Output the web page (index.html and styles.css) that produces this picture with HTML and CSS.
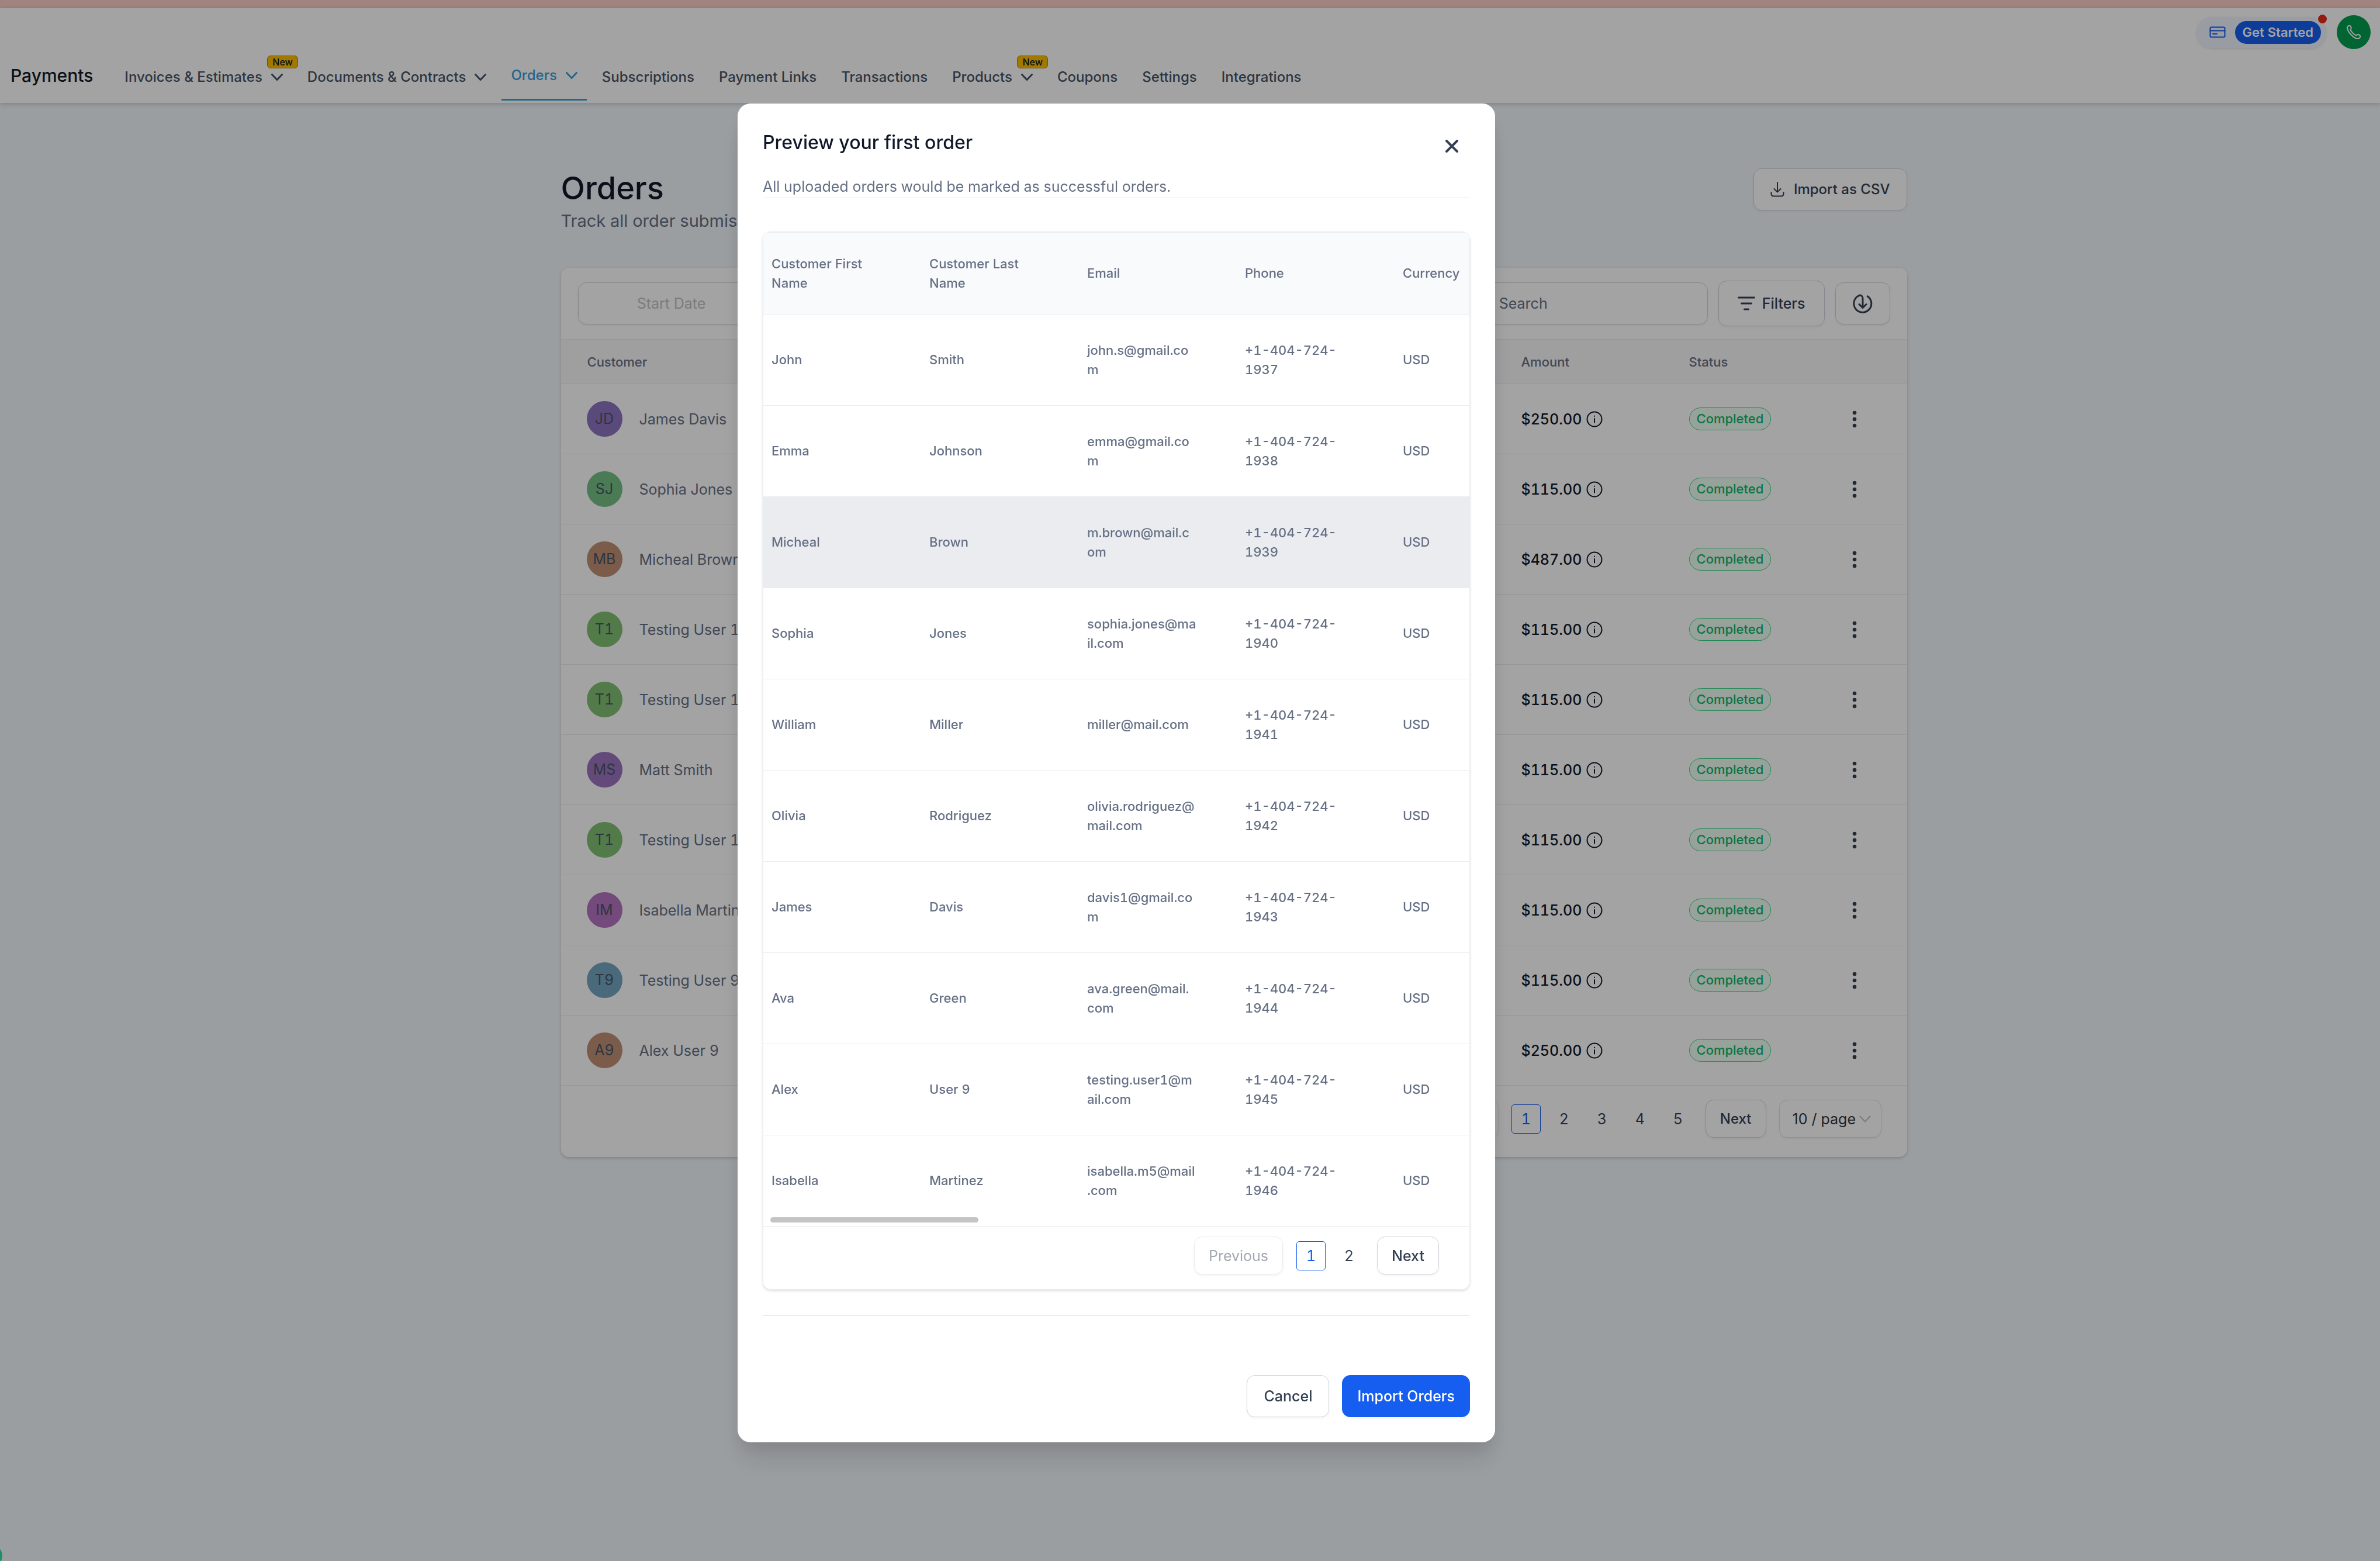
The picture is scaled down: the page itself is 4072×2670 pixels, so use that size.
FILE: index.html
```html
<!DOCTYPE html>
<html lang="en">

<head>
  <meta charset="UTF-8" />
  <meta name="viewport" content="width=device-width, initial-scale=1.0" />
  <title>Payments - Orders</title>
  <link rel="stylesheet" href="styles.css">
</head>

<body>
  <!-- Shared icons -->
  <svg class="sprite" aria-hidden="true">
    <symbol id="chevron" viewBox="0 0 20 12"><path d="M1.5 1.5 10 10.5l8.500-9" /></symbol>
    <symbol id="info" viewBox="0 0 28 28"><circle cx="14" cy="14" r="12.500" /><path d="M14 13v6.500M14 8.500v.5" /></symbol>
    <symbol id="dots" viewBox="0 0 8 30"><circle cx="4" cy="4" r="3.300" /><circle cx="4" cy="15" r="3.300" /><circle cx="4" cy="26" r="3.300" /></symbol>
  </svg>

  <div class="alert-strip"></div>

  <header class="header">
    <div class="header-top">
      <div class="start-pill">
        <svg class="icon card-icon" viewBox="0 0 28 20"><rect x="1.5" y="1.500" width="25" height="17" rx="2" /><path d="M1.500 7.500h25M6 13h7" /></svg>
        <button class="start-button">Get Started</button>
        <span class="red-dot"></span>
      </div>
      <button class="phone-button" aria-label="Call">
        <svg class="icon" viewBox="0 0 24 24"><path d="M1 4.500C1 2.500 3 .8 4.800.8c1.500 0 3 2.600 3 4.200 0 1.300-1.500 1.800-1.300 3 .6 2.400 6.600 8.800 9.500 9.400 1.300.2 1.800-1.400 3.200-1.400 1.600 0 4 1.600 4 3.100 0 2-1.800 4-4 4C12.500 23.100 1 11.500 1 4.500z" /></svg>
      </button>
    </div>
    <nav class="nav">
      <span class="nav-title">Payments</span>
      <a href="#">Invoices &amp; Estimates <svg class="icon chevron"><use href="#chevron" /></svg><span class="new-badge">New</span></a>
      <a href="#">Documents &amp; Contracts <svg class="icon chevron"><use href="#chevron" /></svg></a>
      <a href="#" class="active">Orders <svg class="icon chevron"><use href="#chevron" /></svg></a>
      <a href="#">Subscriptions</a>
      <a href="#">Payment Links</a>
      <a href="#">Transactions</a>
      <a href="#">Products <svg class="icon chevron"><use href="#chevron" /></svg><span class="new-badge">New</span></a>
      <a href="#">Coupons</a>
      <a href="#">Settings</a>
      <a href="#">Integrations</a>
    </nav>
  </header>

  <div class="page">
    <main class="content">
      <div class="page-heading">
        <div>
          <h1>Orders</h1>
          <p>Track all order submissions</p>
        </div>
        <button class="button import-button">
          <svg class="icon import-icon" viewBox="0 0 24 26"><path d="M12 1v16M6.500 12l5.500 5.500 5.500-5.500M1.500 18v3a3.500 3.500 0 0 0 3.500 3.500h14a3.500 3.500 0 0 0 3.500-3.500v-3" /></svg>
          Import as CSV
        </button>
      </div>

      <section class="card">
        <div class="toolbar">
          <input class="field date-field" type="text" placeholder="Start Date" aria-label="Start date" />
          <input class="field search-field" type="text" placeholder="Search" aria-label="Search" />
          <button class="button filter-button">
            <svg class="icon filter-icon" viewBox="0 0 30 24"><path d="M1.500 2h27M6.500 12h17M11.500 22h7" /></svg>
            Filters
          </button>
          <button class="button download-button" aria-label="Download">
            <svg class="icon" viewBox="0 0 34 34"><path d="M25.200 4.800A15 15 0 1 1 10 3.800c4-1.900 7 .4 7 5.200v15M11 18.500l6 6 6-6" /></svg>
          </button>
        </div>

        <table class="orders-table">
          <thead>
            <tr><th class="col-customer">Customer</th><th class="col-amount">Amount</th><th class="col-status">Status</th><th></th></tr>
          </thead>
          <tbody>
            <tr>
              <td><div class="customer"><span class="avatar indigo">JD</span>James Davis</div></td>
              <td><div class="amount">$250.00 <svg class="icon"><use href="#info" /></svg></div></td>
              <td><span class="status">Completed</span></td>
              <td><button class="row-menu" aria-label="More"><svg><use href="#dots" /></svg></button></td>
            </tr>
            <tr>
              <td><div class="customer"><span class="avatar green">SJ</span>Sophia Jones</div></td>
              <td><div class="amount">$115.00 <svg class="icon"><use href="#info" /></svg></div></td>
              <td><span class="status">Completed</span></td>
              <td><button class="row-menu" aria-label="More"><svg><use href="#dots" /></svg></button></td>
            </tr>
            <tr>
              <td><div class="customer"><span class="avatar brown">MB</span>Micheal Brown</div></td>
              <td><div class="amount">$487.00 <svg class="icon"><use href="#info" /></svg></div></td>
              <td><span class="status">Completed</span></td>
              <td><button class="row-menu" aria-label="More"><svg><use href="#dots" /></svg></button></td>
            </tr>
            <tr>
              <td><div class="customer"><span class="avatar lime">T1</span>Testing User 1</div></td>
              <td><div class="amount">$115.00 <svg class="icon"><use href="#info" /></svg></div></td>
              <td><span class="status">Completed</span></td>
              <td><button class="row-menu" aria-label="More"><svg><use href="#dots" /></svg></button></td>
            </tr>
            <tr>
              <td><div class="customer"><span class="avatar lime">T1</span>Testing User 1</div></td>
              <td><div class="amount">$115.00 <svg class="icon"><use href="#info" /></svg></div></td>
              <td><span class="status">Completed</span></td>
              <td><button class="row-menu" aria-label="More"><svg><use href="#dots" /></svg></button></td>
            </tr>
            <tr>
              <td><div class="customer"><span class="avatar purple">MS</span>Matt Smith</div></td>
              <td><div class="amount">$115.00 <svg class="icon"><use href="#info" /></svg></div></td>
              <td><span class="status">Completed</span></td>
              <td><button class="row-menu" aria-label="More"><svg><use href="#dots" /></svg></button></td>
            </tr>
            <tr>
              <td><div class="customer"><span class="avatar lime">T1</span>Testing User 1</div></td>
              <td><div class="amount">$115.00 <svg class="icon"><use href="#info" /></svg></div></td>
              <td><span class="status">Completed</span></td>
              <td><button class="row-menu" aria-label="More"><svg><use href="#dots" /></svg></button></td>
            </tr>
            <tr>
              <td><div class="customer"><span class="avatar magenta">IM</span>Isabella Martinez</div></td>
              <td><div class="amount">$115.00 <svg class="icon"><use href="#info" /></svg></div></td>
              <td><span class="status">Completed</span></td>
              <td><button class="row-menu" aria-label="More"><svg><use href="#dots" /></svg></button></td>
            </tr>
            <tr>
              <td><div class="customer"><span class="avatar blue">T9</span>Testing User 9</div></td>
              <td><div class="amount">$115.00 <svg class="icon"><use href="#info" /></svg></div></td>
              <td><span class="status">Completed</span></td>
              <td><button class="row-menu" aria-label="More"><svg><use href="#dots" /></svg></button></td>
            </tr>
            <tr>
              <td><div class="customer"><span class="avatar brown">A9</span>Alex User 9</div></td>
              <td><div class="amount">$250.00 <svg class="icon"><use href="#info" /></svg></div></td>
              <td><span class="status">Completed</span></td>
              <td><button class="row-menu" aria-label="More"><svg><use href="#dots" /></svg></button></td>
            </tr>
          </tbody>
        </table>

        <div class="pagination card-pagination">
          <button class="page-button" disabled>Previous</button>
          <div class="pages">
            <button class="page-number current">1</button>
            <button class="page-number">2</button>
            <button class="page-number">3</button>
            <button class="page-number">4</button>
            <button class="page-number">5</button>
          </div>
          <button class="page-button">Next</button>
          <div class="page-size">
            <select aria-label="Rows per page">
              <option>10 / page</option>
            </select>
            <svg class="icon chevron"><use href="#chevron" /></svg>
          </div>
        </div>
      </section>
    </main>
  </div>

  <div class="overlay">
    <div class="modal" role="dialog" aria-labelledby="modalTitle">
      <div class="modal-header">
        <h2 id="modalTitle">Preview your first order</h2>
        <button class="close-button" aria-label="Close">
          <svg class="icon" viewBox="0 0 22 22"><path d="M2 2l18 18M20 2 2 20" /></svg>
        </button>
      </div>
      <p class="modal-text">All uploaded orders would be marked as successful orders.</p>

      <div class="preview">
        <div class="preview-scroll">
          <table class="preview-table">
            <thead>
              <tr><th>Customer First Name</th><th>Customer Last Name</th><th>Email</th><th>Phone</th><th>Currency</th></tr>
            </thead>
            <tbody>
              <tr><td>John</td><td>Smith</td><td>john.s@gmail.com</td><td>+1-404-724-1937</td><td>USD</td></tr>
              <tr><td>Emma</td><td>Johnson</td><td>emma@gmail.com</td><td>+1-404-724-1938</td><td>USD</td></tr>
              <tr class="selected"><td>Micheal</td><td>Brown</td><td>m.brown@mail.com</td><td>+1-404-724-1939</td><td>USD</td></tr>
              <tr><td>Sophia</td><td>Jones</td><td>sophia.jones@mail.com</td><td>+1-404-724-1940</td><td>USD</td></tr>
              <tr><td>William</td><td>Miller</td><td>miller@mail.com</td><td>+1-404-724-1941</td><td>USD</td></tr>
              <tr><td>Olivia</td><td>Rodriguez</td><td>olivia.rodriguez@mail.com</td><td>+1-404-724-1942</td><td>USD</td></tr>
              <tr><td>James</td><td>Davis</td><td>davis1@gmail.com</td><td>+1-404-724-1943</td><td>USD</td></tr>
              <tr><td>Ava</td><td>Green</td><td>ava.green@mail.com</td><td>+1-404-724-1944</td><td>USD</td></tr>
              <tr><td>Alex</td><td>User 9</td><td>testing.user1@mail.com</td><td>+1-404-724-1945</td><td>USD</td></tr>
              <tr><td>Isabella</td><td>Martinez</td><td>isabella.m5@mail.com</td><td>+1-404-724-1946</td><td>USD</td></tr>
            </tbody>
          </table>
          <div class="scroll-thumb"></div>
        </div>
        <div class="pagination preview-pagination">
          <button class="page-button" disabled>Previous</button>
          <div class="pages">
            <button class="page-number current">1</button>
            <button class="page-number">2</button>
          </div>
          <button class="page-button">Next</button>
        </div>
      </div>

      <div class="modal-footer">
        <button class="button cancel-button">Cancel</button>
        <button class="button primary">Import Orders</button>
      </div>
    </div>
  </div>

  <div class="help-bubble"></div>
</body>

</html>
```

FILE: styles.css
```css
* {
  box-sizing: border-box;
}

body {
  margin: 0;
  min-height: 100vh;
  overflow: hidden;
  background-color: #f2f7fa;
  color: #344054;
  font-family: Inter, sans-serif;
  font-size: 25px;
  font-variant-numeric: tabular-nums;
  line-height: 36px;
}

h1,
h2,
p {
  margin: 0;
}

button,
input,
select {
  margin: 0;
  font: inherit;
  color: inherit;
}

button {
  cursor: pointer;
}

.sprite {
  position: absolute;
  width: 0;
  height: 0;
}

.icon {
  flex: none;
  fill: none;
  stroke: currentColor;
  stroke-width: 3px;
  stroke-linecap: round;
  stroke-linejoin: round;
}

.chevron {
  width: 20px;
  height: 12px;
}

/* Header */
.alert-strip {
  height: 14px;
  background-color: #fccec8;
}

.header {
  position: relative;
  height: 162px;
  padding: 12px 16px 4px 18px;
  display: flex;
  flex-direction: column;
  justify-content: space-between;
  background-color: #fff;
  box-shadow: 0 2px 8px rgba(16, 24, 40, 0.2);
}

.header-top {
  display: flex;
  justify-content: flex-end;
  align-items: center;
  gap: 18px;
}

.start-pill {
  position: relative;
  display: flex;
  align-items: center;
  gap: 16px;
  padding: 7px 9px 7px 22px;
  border-radius: 27px;
  background-color: #eff4ff;
  box-shadow: 0 2px 4px rgba(16, 24, 40, 0.1);
}

.card-icon {
  width: 28px;
  height: 20px;
  color: #155eef;
  stroke-width: 2px;
}

.start-button {
  height: 39px;
  padding: 0 13px;
  border: 0;
  border-radius: 20px;
  background-color: #155eef;
  color: #fff;
  font-size: 22px;
  font-weight: 600;
  line-height: 39px;
}

.red-dot {
  position: absolute;
  top: -4px;
  right: -1px;
  width: 15px;
  height: 15px;
  border-radius: 50%;
  background-color: #e92a19;
}

.phone-button {
  display: flex;
  align-items: center;
  justify-content: center;
  width: 58px;
  height: 58px;
  padding: 0;
  border: 0;
  border-radius: 50%;
  background-color: #009f51;
  color: #fff;
}

.phone-button .icon {
  width: 24px;
  height: 24px;
  stroke-width: 2px;
}

.nav {
  display: flex;
  align-items: flex-end;
  gap: 10px;
}

.nav-title {
  margin-right: 28px;
  padding-bottom: 25px;
  color: #101828;
  font-size: 30px;
  font-weight: 500;
}

.nav a {
  position: relative;
  display: flex;
  align-items: center;
  gap: 15px;
  padding: 0 16px 22px;
  color: #475467;
  font-size: 24px;
  font-weight: 500;
  text-decoration: none;
}

.nav a.active {
  border-bottom: 3px solid #38a0db;
  color: #38a0db;
}

.new-badge {
  position: absolute;
  top: -19px;
  right: -10px;
  padding: 0 8px;
  border: 1px solid #b58600;
  border-radius: 6px;
  background-color: #ffbc00;
  color: #101828;
  font-size: 16px;
  line-height: 20px;
}

/* Page */
.page {
  padding-left: 150px;
}

.content {
  max-width: 2303px;
  margin: 0 auto;
  padding-top: 112px;
}

.page-heading {
  display: flex;
  justify-content: space-between;
  align-items: flex-start;
  margin-bottom: 60px;
}

.page-heading h1 {
  margin-bottom: 2px;
  color: #101828;
  font-size: 54px;
  font-weight: 500;
  line-height: 68px;
}

.page-heading p {
  color: #667085;
  font-size: 29px;
  line-height: 40px;
}

.button {
  display: flex;
  align-items: center;
  justify-content: center;
  height: 72px;
  padding: 0 28px;
  border: 1px solid #d0d5dd;
  border-radius: 14px;
  background-color: #fff;
  box-shadow: 0 2px 4px rgba(16, 24, 40, 0.05);
  font-weight: 500;
}

.import-button {
  gap: 16px;
  font-size: 24px;
}

.import-icon {
  width: 24px;
  height: 26px;
  stroke-width: 2px;
}

.card {
  border-radius: 14px;
  background-color: #fff;
  box-shadow: 0 2px 5px rgba(16, 24, 40, 0.2);
}

.toolbar {
  display: flex;
  align-items: center;
  gap: 18px;
  padding: 22px 29px;
}

.field {
  height: 72px;
  padding: 0 42px;
  border: 1px solid #d0d5dd;
  border-radius: 14px;
  background-color: #fff;
  box-shadow: 0 2px 4px rgba(16, 24, 40, 0.05);
}

.field::placeholder {
  color: #667085;
  opacity: 1;
}

.date-field {
  width: 320px;
  text-align: center;
}

.date-field::placeholder {
  color: #c2c2c2;
}

.search-field {
  width: 400px;
  margin-left: auto;
}

.filter-button {
  gap: 12px;
  height: 78px;
  padding: 0 32px;
}

.filter-icon {
  width: 30px;
  height: 24px;
}

.download-button {
  width: 94px;
  padding: 0;
}

.download-button .icon {
  width: 34px;
  height: 34px;
}

table {
  border-spacing: 0;
  table-layout: fixed;
}

th {
  text-align: left;
  font-weight: 500;
}

.orders-table {
  width: 100%;
}

.orders-table th {
  height: 77px;
  padding: 0;
  border-top: 1px solid #eaecf0;
  border-bottom: 1px solid #eaecf0;
  background-color: #f9f9fa;
  color: #667085;
  font-size: 22px;
}

.orders-table td {
  height: 120px;
  padding: 0;
  border-bottom: 1px solid #eaecf0;
}

.orders-table .col-customer {
  padding-left: 45px;
}

.orders-table td:first-child {
  padding-left: 44px;
}

.col-amount {
  width: 287px;
}

.col-status {
  width: 273px;
}

.orders-table th:last-child {
  width: 100px;
}

.customer {
  display: flex;
  align-items: center;
  gap: 29px;
  color: #667085;
}

.avatar {
  width: 61px;
  height: 61px;
  border-radius: 50%;
  color: #475467;
  line-height: 61px;
  text-align: center;
}

.avatar.indigo { background-color: #8b75c0; }
.avatar.green { background-color: #75c086; }
.avatar.brown { background-color: #c09075; }
.avatar.lime { background-color: #82c075; }
.avatar.purple { background-color: #9d75c0; }
.avatar.magenta { background-color: #b575c0; }
.avatar.blue { background-color: #75a5c0; }

.amount {
  display: flex;
  align-items: center;
  gap: 8px;
  color: #101828;
  font-weight: 500;
}

.amount .icon {
  width: 28px;
  height: 28px;
  stroke-width: 2px;
}

.status {
  display: inline-block;
  padding: 0 12px;
  border: 1px solid #32d583;
  border-radius: 20px;
  background-color: #ecfdf3;
  color: #12b76a;
  font-size: 22px;
  font-weight: 500;
  line-height: 37px;
}

.row-menu {
  display: block;
  padding: 6px;
  border: 0;
  background: none;
}

.row-menu svg {
  display: block;
  width: 8px;
  height: 30px;
  fill: currentColor;
}

/* Pagination */
.pagination {
  display: flex;
  justify-content: flex-end;
  align-items: center;
  gap: 23px;
}

.card-pagination {
  gap: 22px;
  padding: 24px 44px 33px;
}

.pages {
  display: flex;
  gap: 15px;
}

.page-button {
  height: 65px;
  padding: 0 24px;
  border: 1px solid #d0d5dd;
  border-radius: 14px;
  background-color: #fff;
  box-shadow: 0 2px 4px rgba(16, 24, 40, 0.05);
  font-weight: 500;
}

.card-pagination .page-button {
  font-size: 24px;
}

.page-button:disabled {
  border-color: #eaecf0;
  color: #a3a8b2;
  font-weight: 400;
}

.page-number {
  width: 50px;
  height: 50px;
  padding: 0;
  border: 0;
  border-radius: 5px;
  background: none;
}

.page-number.current {
  border: 1px solid #155eef;
  color: #155eef;
}

.page-size {
  position: relative;
}

.page-size select {
  width: 175px;
  height: 65px;
  padding: 0 22px;
  border: 1px solid #e0e0e6;
  border-radius: 14px;
  background-color: #fff;
  box-shadow: 0 2px 4px rgba(16, 24, 40, 0.05);
  color: #333639;
  font-variant-numeric: normal;
  appearance: none;
}

.page-size .chevron {
  position: absolute;
  top: 27px;
  right: 18px;
  color: #c2c2c2;
  stroke-width: 2px;
  pointer-events: none;
}

/* Modal */
.overlay {
  position: fixed;
  inset: 0;
  display: flex;
  justify-content: center;
  align-items: flex-start;
  padding: 177px 252px 0 0;
  background-color: rgba(0, 0, 0, 0.36);
}

.modal {
  width: 100%;
  max-width: 1296px;
  padding: 43px;
  border-radius: 22px;
  background-color: #fff;
  box-shadow: 0 36px 43px -7px rgba(16, 24, 40, 0.12), 0 14px 24px rgba(16, 24, 40, 0.06);
}

.modal-header {
  display: flex;
  justify-content: space-between;
  margin-bottom: 33px;
}

.modal-header h2 {
  color: #101828;
  font-size: 32px;
  font-weight: 500;
  line-height: 48px;
}

.close-button {
  width: 62px;
  height: 48px;
  padding: 12px 20px 0;
  border: 0;
  background: none;
}

.close-button .icon {
  display: block;
  width: 22px;
  height: 22px;
  stroke-width: 4px;
}

.modal-text {
  border-bottom: 1px solid #f2f4f7;
  color: #667085;
}

.preview {
  margin-top: 58px;
  border: 1px solid #eaecf0;
  border-top-width: 2px;
  border-radius: 14px;
  box-shadow: 0 2px 4px rgba(16, 24, 40, 0.15);
}

.preview-scroll {
  position: relative;
  overflow: hidden;
}

.preview-table {
  width: 1350px;
}

.preview-table th,
.preview-table td {
  padding: 0 69px 0 14px;
  border-bottom: 1px solid #eaecf0;
  color: #667085;
  font-size: 22px;
  font-weight: 500;
  line-height: 33px;
  overflow-wrap: break-word;
}

.preview-table th {
  height: 140px;
  background-color: #f9fafb;
}

.preview-table th:last-child {
  white-space: nowrap;
}

.preview-table td {
  height: 156px;
}

.preview-table .selected td {
  background-color: #eaecf0;
}

.scroll-thumb {
  position: absolute;
  left: 12px;
  bottom: 7px;
  width: 356px;
  height: 9px;
  border-radius: 5px;
  background-color: #c4c4c4;
}

.preview-pagination {
  padding: 17px 52px 25px;
}

.modal-footer {
  display: flex;
  justify-content: flex-end;
  gap: 22px;
  margin-top: 43px;
  padding-top: 101px;
  border-top: 2px solid #eaecf0;
}

.button.primary {
  padding: 0 25px;
  border-color: #155eef;
  background-color: #155eef;
  color: #fff;
}

.help-bubble {
  position: fixed;
  left: -32px;
  bottom: -9px;
  width: 36px;
  height: 36px;
  border-radius: 50%;
  background-color: #1f8f63;
}
```
